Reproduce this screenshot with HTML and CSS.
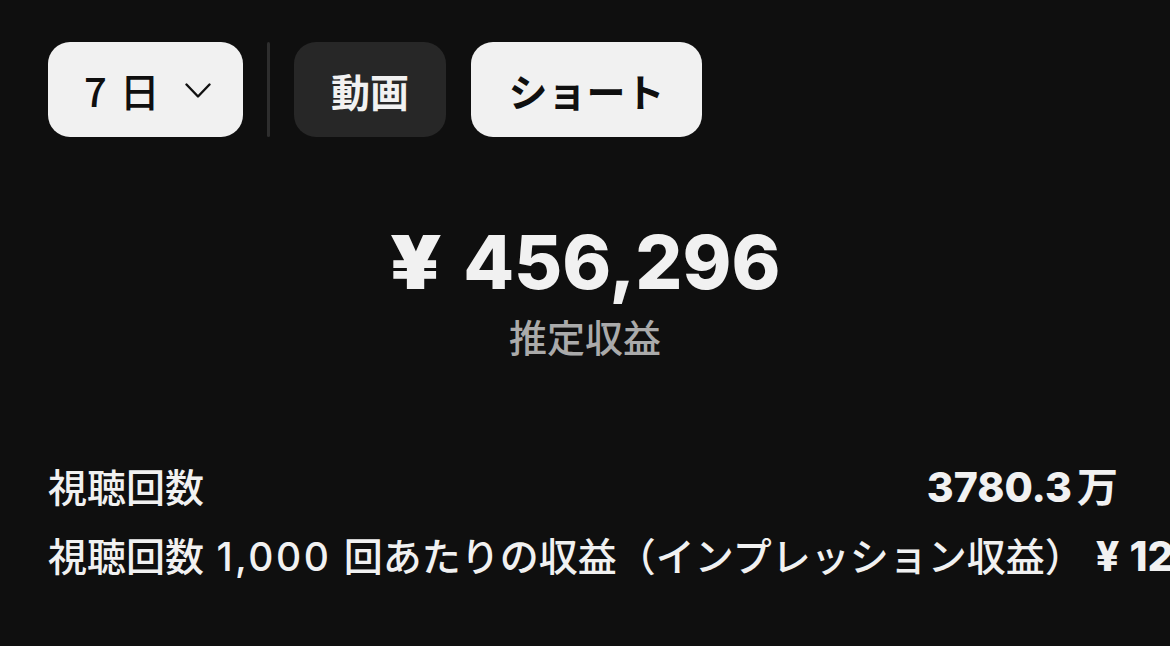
FILE: index.html
```html
<!DOCTYPE html>
<html lang="ja">
<head>
<meta charset="utf-8">
<link rel="stylesheet" href="styles.css">
</head>
<body>
<div class="page">
  <div class="chips">
    <button class="chip chip-light chip-period">
      <span class="num">7</span><span class="day">日</span>
      <svg class="chev" viewBox="0 0 26 16" width="26" height="16"><path d="M1.5 1.5l11.5 12 11.5-12" fill="none" stroke="#111" stroke-width="2.4" stroke-linecap="round" stroke-linejoin="round"/></svg>
    </button>
    <div class="divider"></div>
    <button class="chip chip-dark">動画</button>
    <button class="chip chip-light chip-short">ショート</button>
  </div>

  <div class="summary">
    <div class="amount"><span class="yen">¥</span>456,296</div>
    <div class="caption">推定収益</div>
  </div>

  <div class="rows">
    <div class="row">
      <span class="label">視聴回数</span>
      <span class="value">3780.3<span class="unit">万</span></span>
    </div>
    <div class="row">
      <span class="label">視聴回数 <span class="lat">1,000</span> 回あたりの収益（インプレッション収益）</span>
      <span class="value"><span class="yen-s">¥</span>12,071</span>
    </div>
  </div>
</div>
</body>
</html>
```

FILE: styles.css
```css
* { box-sizing: border-box; }
html, body {
  margin: 0;
  padding: 0;
  background: #0f0f0f;
  overflow: hidden;
}
body {
  font-family: Inter, "Noto Sans CJK JP", sans-serif;
  color: #f1f1f1;
  width: 1170px;
  height: 646px;
}
.page {
  padding: 42px 0 0 48px;
}
.chips {
  display: flex;
  align-items: stretch;
  gap: 24px;
  height: 95px;
}
.chip {
  border: none;
  border-radius: 22px;
  height: 95px;
  font-family: Inter, "Noto Sans CJK JP", sans-serif;
  font-size: 39px;
  font-weight: 600;
  display: flex;
  align-items: center;
  justify-content: center;
  padding: 0;
  cursor: pointer;
}
.chip-light { background: #f1f1f1; color: #0f0f0f; }
.chip-dark { background: #272727; color: #f1f1f1; width: 152px; }
.chip-short { width: 231px; margin-left: 1px; }
.chip-period {
  width: 195px;
  padding: 0 32px 0 36px;
  justify-content: flex-start;
  font-family: "Noto Sans CJK JP", sans-serif;
  font-weight: 500;
  font-size: 40px;
}
.chip-period .day { margin-left: 13px; }
.chip-period .chev { margin-left: auto; margin-top: 2px; }
.divider {
  width: 3px;
  background: #2e2e2e;
  border-radius: 2px;
}
.summary {
  margin-top: 80px;
  margin-left: -48px;
  display: flex;
  flex-direction: column;
  align-items: center;
}
.amount {
  font-size: 74px;
  font-weight: 800;
  line-height: 90px;
  padding-left: 4px;
}
.yen {
  display: inline-block;
  font-weight: 900;
  transform: scaleX(1.2);
  margin-right: 26px;
}
.caption {
  font-size: 38px;
  font-weight: 500;
  color: #aaaaaa;
  line-height: 50px;
  margin-top: 6px;
}
.rows {
  margin-top: 91px;
  padding-right: 52px;
}
.row {
  display: flex;
  justify-content: space-between;
  align-items: baseline;
  white-space: nowrap;
  gap: 12px;
  height: 72px;
  font-size: 39px;
  font-weight: 500;
}
.label { font-weight: 500; }
.lat { font-weight: 500; letter-spacing: 2.5px; margin: 0 2px; }
.value { font-weight: 800; font-size: 41px; }
.unit { font-family: "Noto Sans CJK JP", sans-serif; font-weight: 700; margin-left: 5px; }
.yen-s { margin-right: 10px; }
```
